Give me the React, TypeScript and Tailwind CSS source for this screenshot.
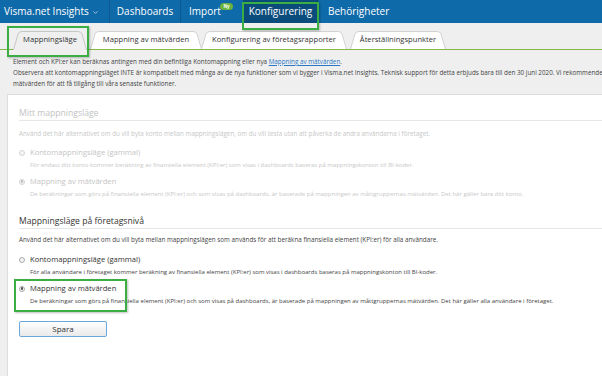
import { ChevronDown } from "lucide-react";

function TabShape({ w, h, fill, stroke }: { w: number; h: number; fill: string; stroke: string }) {
  const d = `M0.5,${h} L5,3 Q6,0.5 9,0.5 L${w - 9},0.5 Q${w - 6},0.5 ${w - 5},3 L${w - 0.5},${h}`;
  return (
    <svg className="absolute inset-0" width={w} height={h} viewBox={`0 0 ${w} ${h}`}>
      <path d={d} fill={fill} stroke={stroke} strokeWidth="1" />
    </svg>
  );
}

function Tab({ label, w, active, className }: { label: string; w: number; active?: boolean; className?: string }) {
  const h = active ? 19 : 18;
  return (
    <div className={`relative flex items-center justify-center ${active ? "z-10 -mb-px h-[19px]" : "h-[18px]"} ${className ?? ""}`} style={{ width: w }}>
      <TabShape w={w} h={h} fill={active ? "#efefef" : "#ffffff"} stroke={active ? "#c6c6c6" : "#d2d2d2"} />
      <span className="relative pb-px text-[7.6px] text-[#333]">{label}</span>
    </div>
  );
}

function Radio({ checked, disabled }: { checked?: boolean; disabled?: boolean }) {
  return (
    <span
      className={`flex h-[6px] w-[6px] items-center justify-center rounded-full border ${
        disabled ? "border-[#d4d4d4] bg-[#f6f6f6]" : "border-[#aaa] bg-[#f3f3f3]"
      }`}
    >
      {checked && <span className={`h-[2.5px] w-[2.5px] rounded-full ${disabled ? "bg-[#bbb]" : "bg-[#555]"}`} />}
    </span>
  );
}

function Option({
  label,
  desc,
  checked,
  disabled,
  className,
}: {
  label: string;
  desc: string;
  checked?: boolean;
  disabled?: boolean;
  className?: string;
}) {
  return (
    <div className={className}>
      <div className="flex h-[11px] items-center">
        <span className="flex w-[11px] justify-start">
          <Radio checked={checked} disabled={disabled} />
        </span>
        <span className={`text-[7.6px] leading-[11px] ${disabled ? "text-[#c4c4c4]" : "text-[#333]"}`}>{label}</span>
      </div>
      <div className={`mt-[1.5px] pl-[11px] text-[6px] leading-[10px] ${disabled ? "text-[#c8c8c8]" : "text-[#444]"}`}>{desc}</div>
    </div>
  );
}

function GreenBox({ className }: { className: string }) {
  return <div className={`pointer-events-none absolute z-20 border-2 border-[#3aad43] shadow-[1px_1px_2px_rgba(0,0,0,0.25)] ${className}`} />;
}

export default function App() {
  return (
    <div className="relative h-[376px] w-[602px] overflow-hidden bg-[#efefef] font-['Open_Sans','Liberation_Sans',sans-serif] whitespace-nowrap">
      {/* top navigation */}
      <nav className="flex h-[23px] items-stretch bg-[#0f6aa9] text-[10px] text-white">
        <div className="flex w-[109px] items-center pl-[4px]">
          <span>Visma.net Insights</span>
          <ChevronDown className="ml-[3px] mt-px h-[7px] w-[7px] text-[#cfe2f0]" strokeWidth={2.5} />
        </div>
        <div className="flex w-[71px] items-center justify-center border-l border-[#0b5990]">Dashboards</div>
        <div className="relative flex w-[63px] items-center border-l border-[#0b5990] pl-[8px]">
          <span>Import</span>
          <span className="absolute left-[39px] top-[3px] flex h-[7px] w-[13px] items-center justify-center rounded-full bg-[#6ab33d] text-[4.5px] font-bold leading-none text-white">
            Ny
          </span>
        </div>
        <div className="relative flex w-[75px] items-center justify-center bg-[#0a4d7d]">
          Konfigurering
        </div>
        <div className="flex items-center border-l border-[#0b5990] pl-[9px]">Behörigheter</div>
      </nav>

      {/* tabs */}
      <div className="flex h-[27px] items-end border-b border-[#84b944] pl-[13px]">
        <Tab label="Mappningsläge" w={74} active />
        <Tab label="Mappning av mätvärden" w={112} className="ml-[3px]" />
        <Tab label="Konfigurering av företagsrapporter" w={146} className="-ml-[1px]" />
        <Tab label="Återställningspunkter" w={96} className="ml-[3px]" />
      </div>

      {/* info */}
      <div className="h-[44px] pl-[13px] pt-[6px] text-[6.3px] leading-[11px] text-[#444]">
        <div>
          Element och KPI:er kan beräknas antingen med din befintliga Kontomappning eller nya{" "}
          <span className="text-[#2a77c4] underline">Mappning av mätvärden</span>.
        </div>
        <div>
          Observera att kontomappningsläget INTE är kompatibelt med många av de nya funktioner som vi bygger i Visma.net Insights. Teknisk
          support för detta erbjuds bara till den 30 juni 2020. Vi rekommenderar att du byter till Mappning av
        </div>
        <div>mätvärden för att få tillgång till våra senaste funktioner.</div>
      </div>

      {/* main panel */}
      <div className="ml-[7px] h-[282px] border-l border-t border-[#dedede] bg-white pl-[11px] pt-[12px]">
        <div className="border-b border-[#e6e6e6] pb-[1px] text-[8.6px] leading-[12px] text-[#c2c2c2]">Mitt mappningsläge</div>
        <div className="mt-[8px] text-[6.3px] leading-[10px] text-[#c8c8c8]">
          Använd det här alternativet om du vill byta konto mellan mappningslägen, om du vill testa utan att påverka de andra användarna i företaget.
        </div>
        <Option
          className="mt-[8px]"
          disabled
          label="Kontomappningsläge (gammal)"
          desc="För endast ditt konto kommer beräkning av finansiella element (KPI:er) som visas i dashboards baseras på mappningskonton till BI-koder."
        />
        <Option
          className="mt-[6.5px]"
          disabled
          checked
          label="Mappning av mätvärden"
          desc="De beräkningar som görs på finansiella element (KPI:er) och som visas på dashboards, är baserade på mappningen av måttgruppernas mätvärden. Det här gäller bara ditt konto."
        />

        <div className="mt-[16px] border-b border-[#e6e6e6] pb-[1px] text-[8.6px] leading-[12px] text-[#333]">Mappningsläge på företagsnivå</div>
        <div className="mt-[6px] text-[6.3px] leading-[10px] text-[#444]">
          Använd det här alternativet om du vill byta mellan mappningslägen som används för att beräkna finansiella element (KPI:er) för alla användare.
        </div>
        <Option
          className="mt-[9.5px]"
          label="Kontomappningsläge (gammal)"
          desc="För alla användare i företaget kommer beräkning av finansiella element (KPI:er) som visas i dashboards baseras på mappningskonton till BI-koder."
        />
        <Option
          className="mt-[6.5px]"
          checked
          label="Mappning av mätvärden"
          desc="De beräkningar som görs på finansiella element (KPI:er) och som visas på dashboards, är baserade på mappningen av måttgruppernas mätvärden. Det här gäller alla användare i företaget."
        />
        <button className="mt-[15px] flex h-[16px] w-[88px] items-center justify-center rounded-[2px] border border-[#6aa7da] bg-gradient-to-b from-white to-[#e9e9e9] text-[8px] text-[#333]">
          Spara
        </button>
      </div>

      {/* annotation boxes */}
      <GreenBox className="left-[242px] top-[2px] h-[28px] w-[77px]" />
      <GreenBox className="left-[7px] top-[26px] h-[31px] w-[82px]" />
      <GreenBox className="left-[14px] top-[279px] h-[33px] w-[113px]" />
    </div>
  );
}
